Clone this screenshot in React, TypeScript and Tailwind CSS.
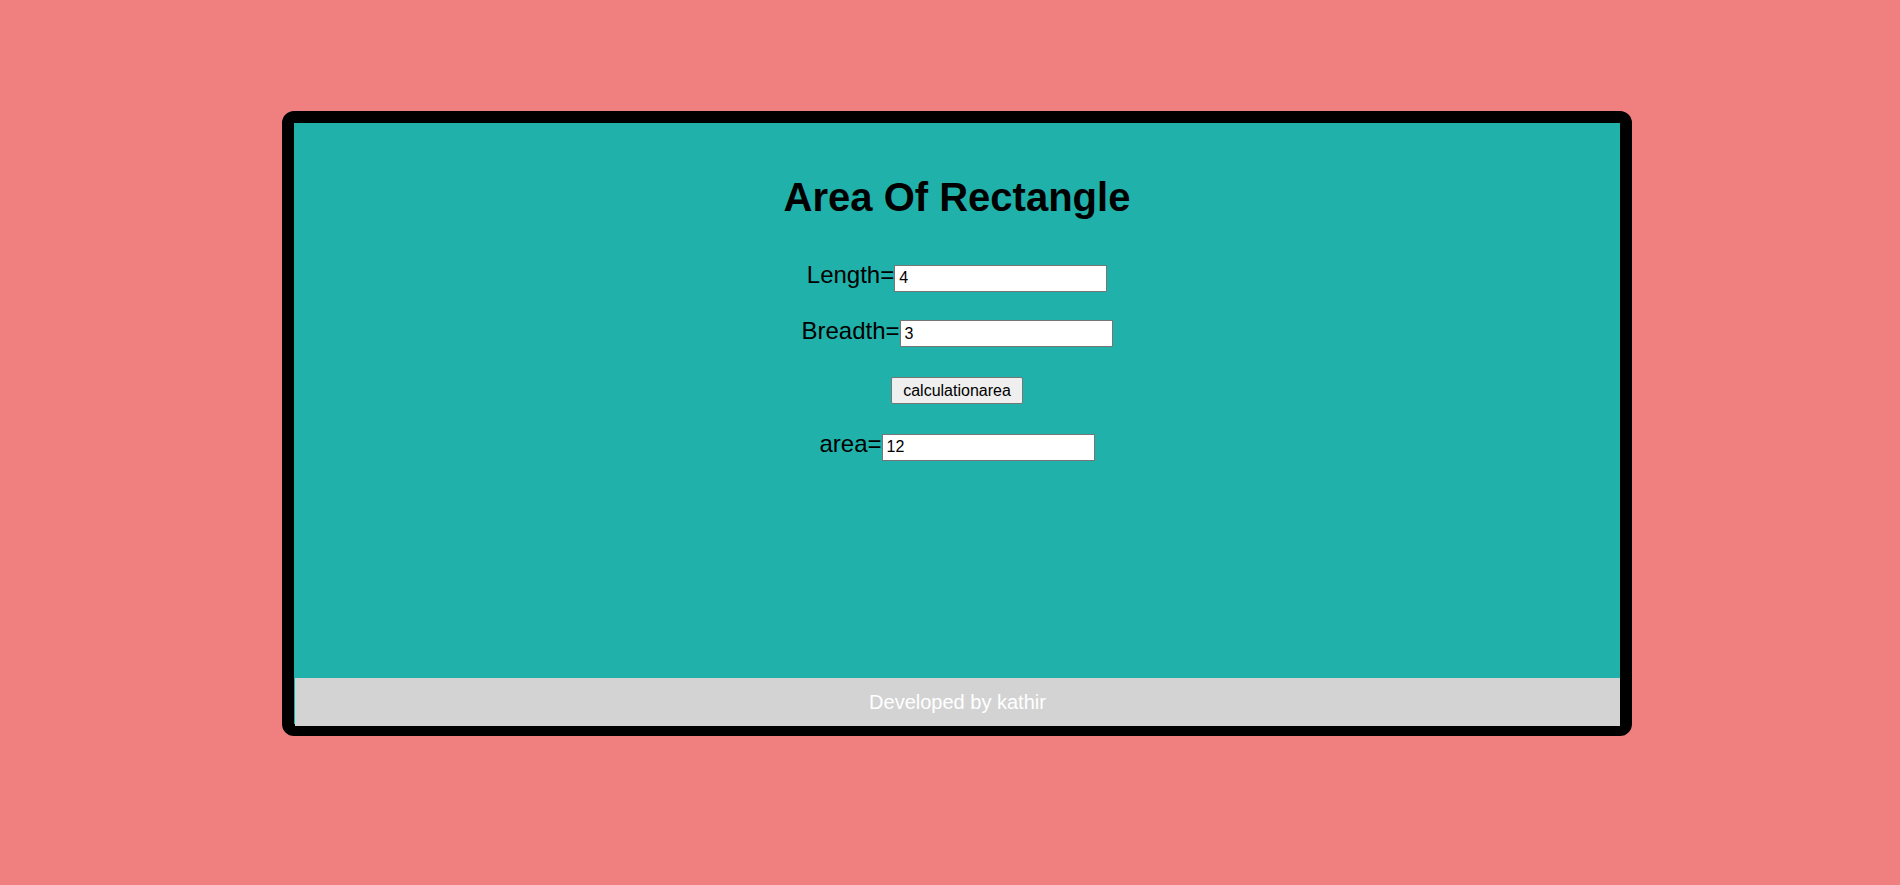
import { useState } from "react";

const Row = ({
  label,
  value,
  onChange,
  className,
}: {
  label: string;
  value: string;
  onChange?: (v: string) => void;
  className?: string;
}) => {
  return (
    <div className={"flex justify-center items-baseline " + (className ?? "")}>
      <span className="text-[24px] leading-[27.6px] text-black">{label}=</span>
      <input
        className="w-[213px] h-[27px] bg-white border border-[#767676] px-1 text-[16px] text-black outline-none"
        value={value}
        onChange={(e) => onChange?.(e.target.value)}
      />
    </div>
  );
};

export default function App() {
  const [length, setLength] = useState("4");
  const [breadth, setBreadth] = useState("3");
  const [area, setArea] = useState("12");

  const calculate = () => {
    setArea(String(Number(length) * Number(breadth)));
  };

  return (
    <div
      className="min-h-screen bg-[#f08080] pt-[111px]"
      style={{ fontFamily: '"Liberation Sans", Arial, sans-serif' }}
    >
      <div className="ml-[282px] w-[1350px] h-[625px] border-[12px] border-black rounded-[12px] bg-[#20b2aa] flex flex-col">
        <div className="flex-1 pt-[51px]">
          <h1 className="text-center text-[40px] leading-[46px] font-bold text-black">
            Area Of Rectangle
          </h1>
          <Row label="Length" value={length} onChange={setLength} className="mt-[41px]" />
          <Row label="Breadth" value={breadth} onChange={setBreadth} className="mt-[25px]" />
          <div className="flex justify-center mt-[30px]">
            <button
              onClick={calculate}
              className="h-[27px] px-[11px] bg-[#efefef] border border-[#767676] rounded-[2px] text-[16px] text-black"
            >
              calculationarea
            </button>
          </div>
          <Row label="area" value={area} className="mt-[26px]" />
        </div>
        <div className="ml-px mb-[-2px] h-[48px] bg-[#d3d3d3] flex items-center justify-center text-white text-[20px]">
          Developed by kathir
        </div>
      </div>
    </div>
  );
}
